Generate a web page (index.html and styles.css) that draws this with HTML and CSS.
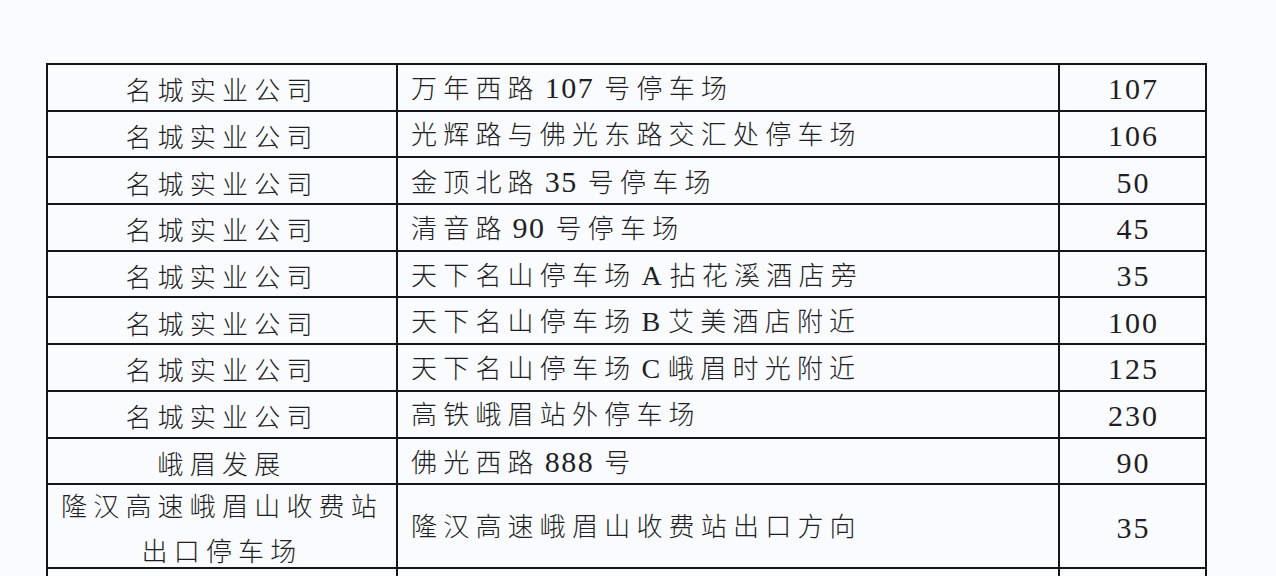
FILE: index.html
```html
<!DOCTYPE html>
<html lang="zh-CN">
<head>
<meta charset="utf-8">
<title>停车场</title>
<link rel="stylesheet" href="styles.css">
</head>
<body>
<div class="page">
<table class="sheet">
<colgroup><col class="c1"><col class="c2"><col class="c3"></colgroup>
<tbody>
<tr><td class="org">名城实业公司</td><td class="loc">万年西路<span class="n">107</span>号停车场</td><td class="cnt">107</td></tr>
<tr><td class="org">名城实业公司</td><td class="loc">光辉路与佛光东路交汇处停车场</td><td class="cnt">106</td></tr>
<tr><td class="org">名城实业公司</td><td class="loc">金顶北路<span class="n">35</span>号停车场</td><td class="cnt">50</td></tr>
<tr><td class="org">名城实业公司</td><td class="loc">清音路<span class="n">90</span>号停车场</td><td class="cnt">45</td></tr>
<tr><td class="org">名城实业公司</td><td class="loc">天下名山停车场<span class="n l">A</span>拈花溪酒店旁</td><td class="cnt">35</td></tr>
<tr><td class="org">名城实业公司</td><td class="loc">天下名山停车场<span class="n l">B</span>艾美酒店附近</td><td class="cnt">100</td></tr>
<tr><td class="org">名城实业公司</td><td class="loc">天下名山停车场<span class="n l">C</span>峨眉时光附近</td><td class="cnt">125</td></tr>
<tr><td class="org">名城实业公司</td><td class="loc">高铁峨眉站外停车场</td><td class="cnt">230</td></tr>
<tr><td class="org">峨眉发展</td><td class="loc">佛光西路<span class="n">888</span>号</td><td class="cnt">90</td></tr>
<tr class="tall"><td class="org two"><div class="twobox">隆汉高速峨眉山收费站<br>出口停车场</div></td><td class="loc">隆汉高速峨眉山收费站出口方向</td><td class="cnt">35</td></tr>
<tr class="cut"><td></td><td></td><td></td></tr>
</tbody>
</table>
</div>
</body>
</html>
```

FILE: styles.css
```css
html, body {
  margin: 0;
  padding: 0;
  background: #fafbfe;
  overflow: hidden;
  height: 576px;
}
.page {
  padding: 63px 0 0 46px;
}
.sheet {
  border-collapse: collapse;
  table-layout: fixed;
  width: 1159px;
  font-family: "Liberation Serif", "Noto Sans CJK SC", serif;
  color: #1e1e24;
}
.c1 { width: 350px; }
.c2 { width: 662px; }
.c3 { width: 147px; }
.sheet td {
  border: 2px solid #15151a;
  height: 46.7px;
  padding: 4px 0 0 0;
  box-sizing: border-box;
  vertical-align: middle;
  font-size: 26px;
  line-height: 38px;
  letter-spacing: 6.2px;
  white-space: nowrap;
}
.sheet td.org {
  text-align: center;
  font-family: "Noto Sans CJK SC", sans-serif;
  font-weight: 300;
}
.sheet td.loc {
  padding-left: 13px;
  font-family: "Liberation Serif", "Noto Sans CJK SC", serif;
  font-weight: 300;
}
.n {
  font-size: 30px;
  letter-spacing: 1.5px;
  margin-left: 5px;
  margin-right: 10px;
}
.n.l {
  font-size: 28px;
  letter-spacing: 0;
  margin-right: 8px;
}
.sheet td.cnt {
  text-align: center;
  font-size: 30px;
  letter-spacing: 2px;
  padding-left: 2px;
}
.tall td {
  height: 84px;
}
.sheet td.two {
  padding: 0;
  vertical-align: top;
}
.twobox {
  height: 80px;
  line-height: 45px;
  margin-top: -3px;
}
.cut td {
  height: 30px;
  border-bottom: none;
}
```
